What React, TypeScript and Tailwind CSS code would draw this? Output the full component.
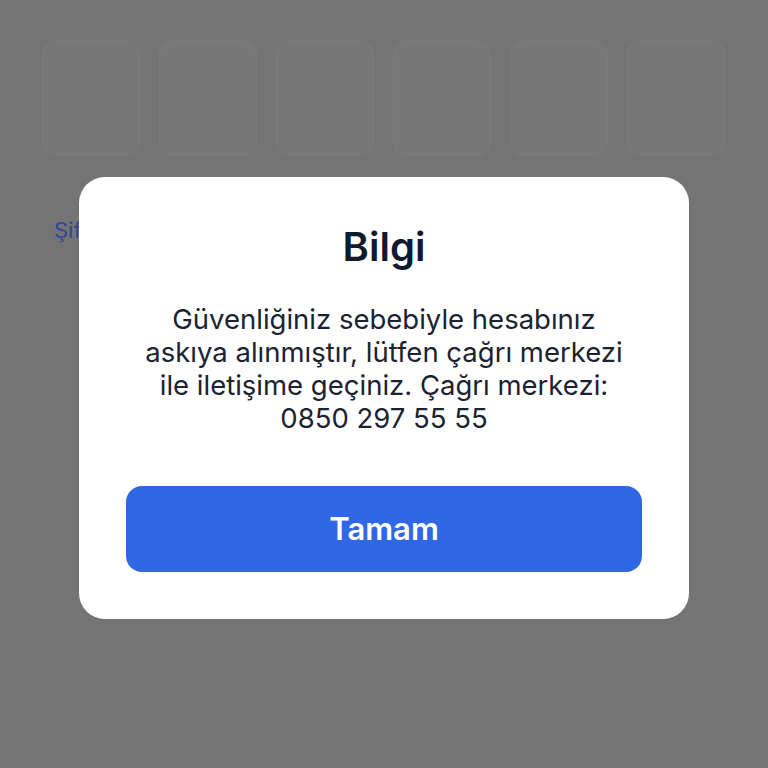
import React from 'react'

const App: React.FC = () => {
  const boxes = [0, 1, 2, 3, 4, 5]

  return (
    <div className="relative h-[768px] w-full overflow-hidden bg-[#747474]" style={{ fontFamily: 'Inter, "Noto Sans", sans-serif' }}>
      {/* Page behind the dialog */}
      <div className="px-[42px] pt-[40px]">
        <div className="flex gap-[19px]">
          {boxes.map((i) => (
            <div key={i} className="h-[116px] w-[98px] rounded-[14px] border border-[#7b7b7b] bg-[#777777]" />
          ))}
        </div>
        <p className="mt-[58px] pl-[12px] text-[22px] text-[#36459a]">Şifremi unuttum</p>
      </div>

      {/* Dialog */}
      <div className="absolute inset-0 flex justify-center pt-[177px]">
        <div className="flex h-[442px] w-[610px] flex-col items-center rounded-[26px] bg-white px-[47px] pt-[47px] pb-[47px]">
          <h2 className="text-[40px] font-semibold leading-[46px] text-[#0f1a2a]">Bilgi</h2>
          <p className="mt-[33px] text-center text-[27.5px] leading-[33px] text-[#1c2330]">
            Güvenliğiniz sebebiyle hesabınız
            <br />
            askıya alınmıştır, lütfen çağrı merkezi
            <br />
            ile iletişime geçiniz. Çağrı merkezi:
            <br />
            0850 297 55 55
          </p>
          <button className="mt-auto flex h-[86px] w-full items-center justify-center rounded-[16px] bg-[#3068e4] text-[31px] font-semibold text-white">
            Tamam
          </button>
        </div>
      </div>
    </div>
  )
}

export default App
